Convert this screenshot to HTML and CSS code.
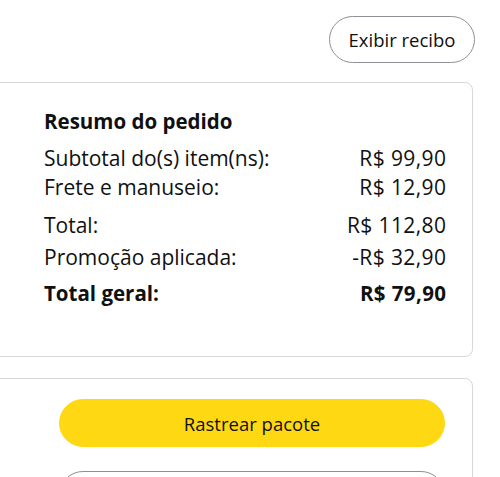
FILE: index.html
```html
<!DOCTYPE html>
<html lang="pt-BR">
<head>
<meta charset="utf-8">
<title>Resumo do pedido</title>
<link rel="stylesheet" href="styles.css">
</head>
<body>
<div class="page">
  <div class="top-actions">
    <button class="btn-outline receipt">Exibir recibo</button>
  </div>
  <section class="card summary">
    <h2 class="title">Resumo do pedido</h2>
    <div class="row r-sub"><span>Subtotal do(s) item(ns):</span><span class="val">R$ 99,90</span></div>
    <div class="row r-ship"><span>Frete e manuseio:</span><span class="val">R$ 12,90</span></div>
    <div class="row r-total"><span>Total:</span><span class="val">R$ 112,80</span></div>
    <div class="row r-promo"><span>Promoção aplicada:</span><span class="val">-R$ 32,90</span></div>
    <div class="row r-grand"><span>Total geral:</span><span class="val">R$ 79,90</span></div>
  </section>
  <section class="card actions">
    <button class="btn-primary">Rastrear pacote</button>
    <button class="btn-secondary">Solicitar cancelamento</button>
  </section>
</div>
</body>
</html>
```
FILE: styles.css
```css
* { box-sizing: border-box; }
html, body { margin: 0; padding: 0; background: #fff; }
body {
  font-family: "Open Sans", "Noto Sans", sans-serif;
  color: #0f1111;
  font-size: 21px;
  line-height: 26px;
  overflow: hidden;
  height: 477px;
}
.page { width: 500px; }
.top-actions {
  display: flex;
  justify-content: flex-end;
  padding: 16px 25px 0 0;
}
button { font-family: inherit; color: #0f1111; cursor: pointer; }
.btn-outline {
  height: 47px;
  width: 146px;
  border: 1px solid #8d9096;
  border-radius: 24px;
  background: #fff;
  font-size: 18.5px;
  padding: 0;
}
.card {
  border: 1px solid #d5d9d9;
  border-radius: 8px;
  margin-left: -20px;
  margin-right: 27px;
  background: #fff;
}
.summary {
  margin-top: 19px;
  padding: 25px 26px 46px 63px;
  height: 275px;
}
.title {
  margin: 0;
  font-size: 20.5px;
  font-weight: 700;
  line-height: 26px;
}
.row {
  display: flex;
  justify-content: space-between;
}
.val { letter-spacing: 0.4px; margin-right: -0.4px; }
.r-sub { margin-top: 11px; }
.r-ship { margin-top: 3px; }
.r-total { margin-top: 12px; }
.r-promo { margin-top: 6px; }
.r-grand { margin-top: 10px; font-weight: 700; font-size: 20.5px; }
.actions {
  margin-top: 21px;
  padding: 20px 27px 20px 78px;
  display: flex;
  flex-direction: column;
  gap: 24px;
}
.btn-primary, .btn-secondary {
  height: 48px;
  width: 100%;
  border-radius: 24px;
  font-size: 18.5px;
  padding: 0;
}
.btn-primary {
  background: #ffd814;
  border: 1px solid #ffd814;
}
.btn-secondary {
  background: #fff;
  border: 1px solid #8d9096;
}
```
